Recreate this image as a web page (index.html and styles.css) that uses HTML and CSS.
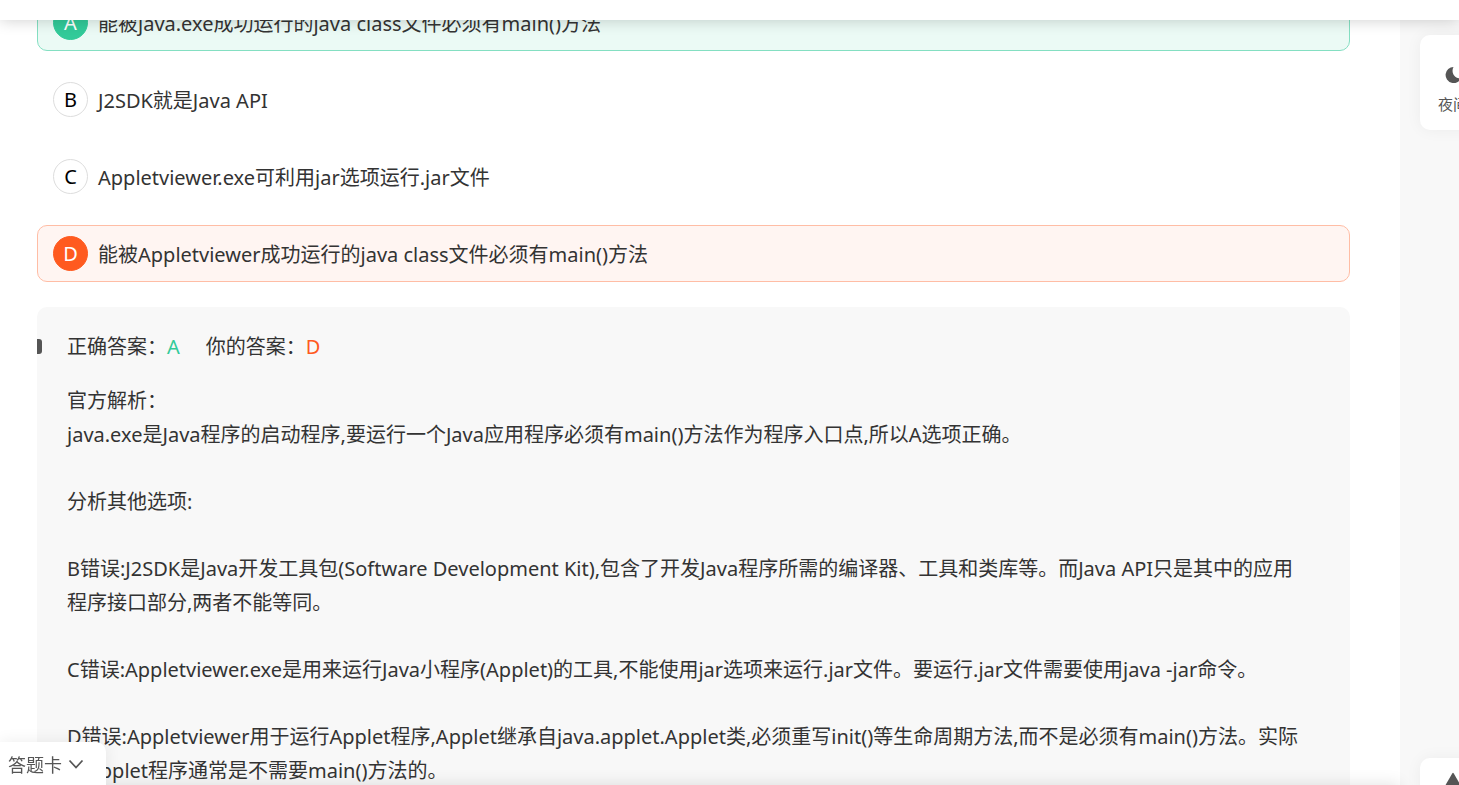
FILE: index.html
```html
<!DOCTYPE html>
<html lang="zh-CN">
<head>
  <meta charset="UTF-8" />
  <meta name="viewport" content="width=device-width, initial-scale=1.0"/>
  <title>Java 练习题解析</title>
  <link rel="stylesheet" href="styles.css">
</head>
<body>
  <header class="top-bar"></header>

  <div class="page">
    <main class="question">
      <!-- Options -->
      <ul class="options">
        <li>
          <button class="option correct" type="button">
            <span class="letter">A</span>
            <span>能被java.exe成功运行的java class文件必须有main()方法</span>
          </button>
        </li>
        <li>
          <button class="option" type="button">
            <span class="letter">B</span>
            <span>J2SDK就是Java API</span>
          </button>
        </li>
        <li>
          <button class="option" type="button">
            <span class="letter">C</span>
            <span>Appletviewer.exe可利用jar选项运行.jar文件</span>
          </button>
        </li>
        <li>
          <button class="option wrong" type="button">
            <span class="letter">D</span>
            <span>能被Appletviewer成功运行的java class文件必须有main()方法</span>
          </button>
        </li>
      </ul>

      <!-- Analysis -->
      <section class="analysis">
        <div class="answers">
          <span>正确答案：<span class="answer-correct">A</span></span>
          <span>你的答案：<span class="answer-wrong">D</span></span>
        </div>
        <div class="analysis-text">
          <p>官方解析：<br>java.exe是Java程序的启动程序,要运行一个Java应用程序必须有main()方法作为程序入口点,所以A选项正确。</p>
          <p>分析其他选项:</p>
          <p>B错误:J2SDK是Java开发工具包(Software Development Kit),包含了开发Java程序所需的编译器、工具和类库等。而Java API只是其中的应用程序接口部分,两者不能等同。</p>
          <p>C错误:Appletviewer.exe是用来运行Java小程序(Applet)的工具,不能使用jar选项来运行.jar文件。要运行.jar文件需要使用java -jar命令。</p>
          <p>D错误:Appletviewer用于运行Applet程序,Applet继承自java.applet.Applet类,必须重写init()等生命周期方法,而不是必须有main()方法。实际上Applet程序通常是不需要main()方法的。</p>
        </div>
      </section>
    </main>

    <!-- Side tools -->
    <aside class="tools">
      <button class="tool" type="button">
        <svg width="18" height="18" viewBox="0 0 18 18" aria-hidden="true">
          <path d="M9.5 1A8 8 0 1 0 17 12C11 13.5 6.5 6.5 9.5 1Z" fill="#555"/>
        </svg>
        <span>夜间</span>
      </button>
      <button class="tool tool-top" type="button" aria-label="回到顶部">
        <svg width="18" height="18" viewBox="0 0 18 18" aria-hidden="true">
          <path d="M8.2 1.4Q9 .2 9.8 1.4L17.6 15Q18 16.5 16.6 16.5H1.4Q0 16.5.4 15Z" fill="#555"/>
        </svg>
      </button>
    </aside>
  </div>

  <div class="bottom-bar"></div>
  <button class="answer-card" type="button">
    <span>答题卡</span>
    <svg width="16" height="16" viewBox="0 0 16 16" aria-hidden="true">
      <path d="M1.5 4.5L8 11.5L14.5 4.5" fill="none" stroke="#555" stroke-width="1.8"/>
    </svg>
  </button>
</body>
</html>
```
FILE: styles.css
```css
:root {
  --text-color: #333;
  --icon-color: #555;
  --green: #32ca99;
  --orange: #ff5a1f;
  --grey-bg: #f8f8f8;
  --tools-width: 59px;
}

* {
  box-sizing: border-box;
}

body {
  margin: 0;
  height: 100vh;
  overflow: hidden;
  color: var(--text-color);
  background-color: white;
  font-family: "Noto Sans", "Noto Sans CJK SC", sans-serif;
  font-size: 20px;
}

button {
  font: inherit;
  color: inherit;
  cursor: pointer;
}

/* Top bar, fixed over the scrolled question */
.top-bar {
  position: fixed;
  top: 0;
  left: 0;
  right: 0;
  height: 20px;
  background-color: white;
  box-shadow: 0 0 16px rgba(0, 0, 0, 0.2);
  z-index: 10;
}

.page {
  display: flex;
  height: 100vh;
}

.question {
  flex: 1;
  min-width: 0;
  margin-top: -6px;
  padding: 0 50px 0 37px;
}

/* Options */
.options {
  display: flex;
  flex-direction: column;
  gap: 20px;
  list-style: none;
  margin: 0 0 25px;
  padding: 0;
}

.option {
  display: flex;
  align-items: center;
  gap: 10px;
  width: 100%;
  height: 57px;
  padding: 0 15px;
  border: 1px solid transparent;
  border-radius: 10px;
  background: none;
  text-align: left;
}

.letter {
  display: flex;
  align-items: center;
  justify-content: center;
  width: 35px;
  height: 35px;
  border: 1px solid #ddd;
  border-radius: 50%;
  color: black;
  background-color: white;
}

.option.correct {
  border-color: #84dfc2;
  background-color: #ebfaf5;
}

.option.correct .letter {
  border-color: var(--green);
  background-color: var(--green);
  color: white;
}

.option.wrong {
  border-color: #ffbda5;
  background-color: #fff5f2;
}

.option.wrong .letter {
  border-color: var(--orange);
  background-color: var(--orange);
  color: white;
}

/* Analysis */
.analysis {
  overflow: hidden;
  padding: 23px 40px 23px 30px;
  border-radius: 10px;
  background-color: var(--grey-bg);
  line-height: 34px;
}

.answers {
  display: flex;
  gap: 26px;
  position: relative;
  margin-bottom: 20px;
}

.answers::before {
  content: '';
  position: absolute;
  top: 9px;
  left: -35px;
  width: 10px;
  height: 15px;
  border-radius: 3px;
  background-color: var(--icon-color);
}

.answer-correct {
  color: var(--green);
}

.answer-wrong {
  color: var(--orange);
}

.analysis-text p {
  margin: 0 0 33px;
}

/* Side tools */
.tools {
  display: flex;
  flex-direction: column;
  justify-content: space-between;
  width: var(--tools-width);
  height: 100vh;
  padding: 35px 0 0 20px;
  background-color: var(--grey-bg);
}

.tool {
  display: flex;
  flex-direction: column;
  align-items: center;
  justify-content: flex-start;
  gap: 10px;
  position: relative;
  width: 66px;
  height: 95px;
  padding: 31px 0 0;
  border: none;
  border-radius: 10px;
  background-color: white;
  box-shadow: 0 0 16px rgba(0, 0, 0, 0.05);
  color: var(--icon-color);
  font-size: 15px;
  line-height: 20px;
  z-index: 5;
}

.tool-top {
  height: 66px;
  margin-bottom: -39px;
  padding-top: 14px;
}

/* Action bar waits just under the window, only its shadow shows */
.bottom-bar {
  position: fixed;
  top: 100%;
  left: 0;
  right: var(--tools-width);
  height: 60px;
  background-color: white;
  box-shadow: 0 0 16px rgba(0, 0, 0, 0.12);
}

.answer-card {
  display: flex;
  align-items: center;
  gap: 6px;
  position: fixed;
  left: 0;
  bottom: 0;
  width: 106px;
  height: 43px;
  padding: 0 8px;
  border: none;
  border-top-right-radius: 10px;
  background-color: white;
  box-shadow: 0 0 16px rgba(0, 0, 0, 0.08);
  color: var(--icon-color);
  font-size: 18px;
}
```
